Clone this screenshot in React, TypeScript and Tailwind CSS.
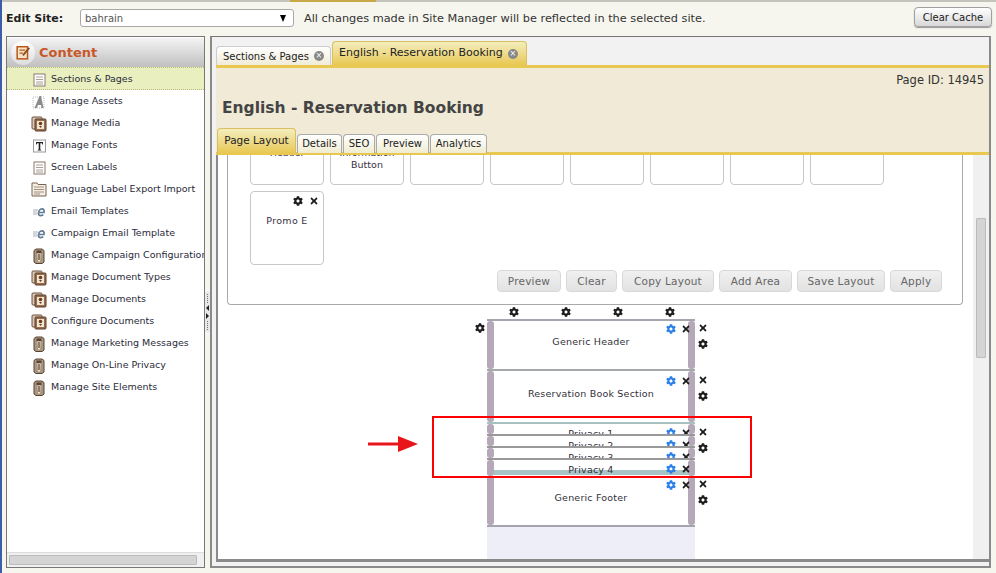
import React from "react";
import { FaCog, FaTimes } from "react-icons/fa";

const Gear = ({ blue = false }: { blue?: boolean }) => (
  <FaCog size={10} className={blue ? "text-[#2b7fe8] shrink-0" : "text-[#1c1c1c] shrink-0"} />
);
const Cross = () => <FaTimes size={10} className="text-[#1c1c1c] shrink-0" />;

const DocIcon = () => (
  <svg width="13" height="14" viewBox="0 0 13 14">
    <rect x="1" y="1" width="11" height="12" fill="#fff" stroke="#8a7a68" />
    <path d="M3 4h7M3 6.500h7M3 9h7M3 11h7" stroke="#a8a096" />
  </svg>
);
const AIcon = () => (
  <svg width="14" height="14" viewBox="0 0 14 14">
    <rect x="1" y="2" width="11" height="11" fill="none" stroke="#bbb" strokeDasharray="1 1" />
    <path d="M2.500 13 7.500 1h1.500l2.500 12h-2l-.5-3H6l-1.300 3Z" fill="#8a8a8a" />
  </svg>
);
const MediaIcon = () => (
  <svg width="16" height="16" viewBox="0 0 16 16">
    <rect x="1" y="1" width="10" height="12" rx="1" fill="#d8c8b4" stroke="#6f5340" />
    <rect x="4" y="3" width="11" height="12" rx="1" fill="#9a6c4a" stroke="#5a4030" />
    <rect x="6" y="5" width="7" height="8" fill="#f0e6d4" />
    <circle cx="9.500" cy="7.500" r="1.800" fill="#6a3e20" />
    <path d="M8 10h3l-1.500 2Z" fill="#6a3e20" />
  </svg>
);
const TIcon = () => (
  <svg width="13" height="14" viewBox="0 0 13 14">
    <rect x="0.500" y="1" width="12" height="12" fill="#fff" stroke="#999" />
    <path d="M3 3h7v2.500H9.300L9 4.200H7.300V10.500l1 .4V11.500H4.700v-.6l1-.4V4.200H4L3.700 5.500H3Z" fill="#222" />
  </svg>
);
const LangIcon = () => (
  <svg width="16" height="15" viewBox="0 0 16 15">
    <path d="M1 1h5l1 1.500h8V14H1Z" fill="#f4eee4" stroke="#7a6450" />
    <path d="M3 5h10M3 7.500h10M3 10h10M3 12h6" stroke="#a09080" />
  </svg>
);
const EmailIcon = () => (
  <svg width="13" height="10" viewBox="0 0 13 10">
    <path d="M0 3h5M0 5h4M0 7h4" stroke="#a8b0b8" />
    <path d="M6.500 5.500h4.500C11.500 3 10.300 1.800 9 1.800 7 1.800 5.500 4 5.500 6.200c0 1.500.9 2.400 2.300 2.400 1 0 1.800-.3 2.500-.9" fill="none" stroke="#5f7a94" strokeWidth="1.700" />
  </svg>
);
const CabinetIcon = () => (
  <svg width="12" height="16" viewBox="0 0 12 16">
    <path d="M1 2.500 3 1h6l2 1.500V14l-2 1.500H3L1 14Z" fill="#a89680" stroke="#5a4434" />
    <rect x="3.500" y="2.500" width="5" height="2.500" fill="#5a4434" />
    <path d="M4.500 5.500h3l-.5 8h-2Z" fill="#ece2d2" />
    <rect x="5.300" y="6" width="1.400" height="6" fill="#6a5240" />
  </svg>
);

type MenuItem = { label: string; icon: React.ReactNode; active?: boolean };
const menu: MenuItem[] = [
  { label: "Sections & Pages", icon: <DocIcon />, active: true },
  { label: "Manage Assets", icon: <AIcon /> },
  { label: "Manage Media", icon: <MediaIcon /> },
  { label: "Manage Fonts", icon: <TIcon /> },
  { label: "Screen Labels", icon: <DocIcon /> },
  { label: "Language Label Export Import", icon: <LangIcon /> },
  { label: "Email Templates", icon: <EmailIcon /> },
  { label: "Campaign Email Template", icon: <EmailIcon /> },
  { label: "Manage Campaign Configuration", icon: <CabinetIcon /> },
  { label: "Manage Document Types", icon: <MediaIcon /> },
  { label: "Manage Documents", icon: <MediaIcon /> },
  { label: "Configure Documents", icon: <MediaIcon /> },
  { label: "Manage Marketing Messages", icon: <CabinetIcon /> },
  { label: "Manage On-Line Privacy", icon: <CabinetIcon /> },
  { label: "Manage Site Elements", icon: <CabinetIcon /> },
];

const Card = ({ children }: { children?: React.ReactNode }) => (
  <div className="w-[74px] h-[74px] border border-[#c8c8c8] rounded-[4px] bg-white text-center text-[9.500px] leading-[12px] text-[#3a3045]">
    {children}
  </div>
);

const LayoutBtn = ({ label, w }: { label: string; w: string }) => (
  <div className={`${w} h-[22px] pt-[1px] flex items-center justify-center rounded-[4px] border border-[#d8d8d8] bg-gradient-to-b from-[#f0f0f0] to-[#e2e2e2] text-[10.500px] tracking-[0.2px] text-[#666]`}>
    {label}
  </div>
);

const Row = ({
  label,
  h,
  pt,
  iconTop,
  border,
  teal = false,
}: {
  label: string;
  h: string;
  pt: string;
  iconTop: string;
  border: string;
  teal?: boolean;
}) => (
  <div className={`relative ${h} ${pt} ${border} overflow-hidden bg-white text-center text-[9.500px] tracking-[0.2px] leading-[12px] text-[#33303a] box-border`}>
    {teal && <span className="absolute left-0 right-0 bottom-0 h-[5px] bg-[#a9c4c4]" />}
    <span className="absolute left-0 top-0 bottom-0 w-[7px] rounded-[3px] bg-[#b5a8b8]" />
    <span className="absolute right-0 top-0 bottom-0 w-[7px] rounded-[3px] bg-[#b5a8b8]" />
    <span className="relative">{label}</span>
    <div className={`absolute ${iconTop} right-[4px] flex items-center gap-[5px]`}>
      <Gear blue />
      <Cross />
    </div>
  </div>
);

const SideActions = () => (
  <div className="h-[52px] flex flex-col gap-[6px] pt-[4px]">
    <Cross />
    <Gear />
  </div>
);

const SubTab = ({ label, w }: { label: string; w: string }) => (
  <div className={`${w} h-[19px] pb-[1px] rounded-t-[4px] border border-[#aaa] border-b-0 bg-gradient-to-b from-white to-[#f0ecd0] flex items-center justify-center`}>
    {label}
  </div>
);

export default function App() {
  return (
    <div className="w-[996px] h-[573px] overflow-hidden bg-[#f6f6ee] border-l-2 border-l-[#3a5fa8] text-[#222] font-['DejaVu_Sans','Liberation_Sans',sans-serif] flex flex-col">
      <div className="h-[2px] flex shrink-0">
        <div className="w-[288px] bg-[#c4c4bc]" />
        <div className="w-[86px] bg-[#c8a848]" />
        <div className="flex-1 bg-[#c4c4bc]" />
      </div>

      <div className="h-[34px] shrink-0 flex items-center pl-[4px] pr-[4px]">
        <span className="w-[74px] font-bold text-[11px]">Edit Site:</span>
        <div className="w-[214px] h-[18px] mb-[2px] rounded-[3px] border border-[#a8a8a8] bg-white flex items-center justify-between pl-[4px] pr-[7px] text-[10px] text-[#555]">
          <span>bahrain</span>
          <span className="w-0 h-0 border-x-[3.500px] border-x-transparent border-t-[7px] border-t-black" />
        </div>
        <span className="ml-[10px] flex-1 text-[11.300px] text-[#333]">All changes made in Site Manager will be reflected in the selected site.</span>
        <div className="w-[78px] h-[20px] mb-[4px] rounded-[4px] border border-[#a0a0a0] bg-gradient-to-b from-white to-[#d8d8d8] shadow-[0_1px_1px_#999] flex items-center justify-center text-[10px] text-[#222]">
          Clear Cache
        </div>
      </div>

      <div className="flex-1 flex pl-[4px] pr-[5px] pb-[5px] min-h-0">
        <aside className="w-[199px] shrink-0 border border-[#777] bg-white flex flex-col overflow-hidden">
          <div className="h-[30px] shrink-0 flex items-center bg-gradient-to-b from-[#f4f4f4] to-[#c0c0c0] pl-[4px] gap-[4px] border-t border-t-white">
            <div className="w-[24px] h-[24px] rounded-full bg-gradient-to-b from-white to-[#ddd] flex items-center justify-center">
              <svg width="15" height="15" viewBox="0 0 13 13">
                <rect x="1" y="1.500" width="9" height="10.500" fill="#f6e4c8" stroke="#b8581c" strokeWidth="1.300" />
                <path d="M3 4.500h5M3 7h3" stroke="#b8581c" />
                <path d="M6 9 11.500 2.500" stroke="#8a4a1c" strokeWidth="1.500" />
              </svg>
            </div>
            <span className="font-bold text-[13px] text-[#c8582a]">Content</span>
          </div>
          <div className="flex-1 min-h-0">
            {menu.map((m) => (
              <div
                key={m.label}
                className={`flex items-center whitespace-nowrap overflow-hidden text-[9.500px] text-[#2a2a3a] ${
                  m.active ? "h-[23px] pt-[2px] bg-[#e9efbf] border-y border-dotted border-y-[#b8b878]" : "h-[22px] pt-[1px]"
                }`}
              >
                <span className="w-[44px] shrink-0 flex justify-end pr-[4px]">
                  <span className="w-[16px] flex justify-center">{m.icon}</span>
                </span>
                <span>{m.label}</span>
              </div>
            ))}
          </div>
          <div className="h-[15px] shrink-0 bg-[#f0f0f0] border-t border-t-[#ddd] px-[2px] py-[2px]">
            <div className="h-[10px] w-[188px] bg-[#d4d4d4] border border-[#bbb] rounded-[1px]" />
          </div>
        </aside>

        <div className="w-[5px] shrink-0 flex items-center">
          <div className="h-[40px] mt-[20px] w-full bg-[#e8e8e8] flex flex-col items-center justify-center gap-[2px]">
            <span className="h-[9px] border-l border-dotted border-l-[#777]" />
            <span className="w-0 h-0 border-y-[3px] border-y-transparent border-r-[3px] border-r-[#222]" />
            <span className="w-0 h-0 border-y-[3px] border-y-transparent border-l-[3px] border-l-[#222]" />
            <span className="h-[9px] border-l border-dotted border-l-[#777]" />
          </div>
        </div>

        <main className="flex-1 min-w-0 border-2 border-[#8a8a8a] border-t-[#777] border-t bg-[#f2f2f2] pl-[4px] pb-[4px] flex flex-col overflow-hidden">
          <div className="h-[28px] shrink-0 flex items-end gap-[1px] relative z-10">
            <div className="w-[115px] h-[19px] rounded-t-[4px] border border-[#ccc] border-b-0 bg-gradient-to-b from-white to-[#f0ecd8] flex items-center pl-[6px] gap-[5px] text-[10px] text-[#222]">
              <span>Sections &amp; Pages</span>
              <span className="w-[10px] h-[10px] rounded-full bg-[#888] text-white text-[8px] leading-[10px] text-center">×</span>
            </div>
            <div className="w-[195px] h-[24px] rounded-t-[4px] border border-[#d8c060] border-b-0 bg-gradient-to-b from-[#f4eebc] to-[#e8c850] flex items-center pl-[6px] gap-[5px] text-[11px] text-[#222]">
              <span>English - Reservation Booking</span>
              <span className="w-[10px] h-[10px] rounded-full bg-[#888] text-white text-[8px] leading-[10px] text-center">×</span>
            </div>
          </div>
          <div className="shrink-0 h-[90px] bg-[#f0ead6] border-t-[3px] border-b-[3px] border-y-[#e8c850] flex flex-col relative">
            <div className="text-right pr-[5px] pt-[5px] text-[11.500px] text-[#333] leading-[14px]">Page ID: 14945</div>
            <div className="pl-[6px] pt-[11px] font-bold text-[15.500px] leading-[20px] text-[#444]">English - Reservation Booking</div>
            <div className="absolute left-[1px] bottom-[-1px] flex items-end gap-[1px] h-[26px] text-[10px] text-[#222]">
              <div className="w-[79px] h-[25px] rounded-t-[4px] border border-[#d8c060] border-b-0 bg-gradient-to-b from-[#f4eebc] to-[#e8c850] flex items-center justify-center text-[10.500px]">Page Layout</div>
              <SubTab label="Details" w="w-[45px]" />
              <SubTab label="SEO" w="w-[32px]" />
              <SubTab label="Preview" w="w-[53px]" />
              <SubTab label="Analytics" w="w-[57px]" />
            </div>
          </div>

          <div className="flex-1 min-h-0 flex bg-white overflow-hidden border-b-[3px] border-b-[#8a8a8a] border-l-2 border-l-[#8a8a8a]">
            <div className="flex-1 min-w-0 relative overflow-hidden">
              <div className="flow-root ml-[9px] w-[736px] h-[150px] border border-[#aaa] border-t-0 rounded-b-[4px] pl-[22px]">
                <div className="flex gap-[6px] mt-[-44px]">
                  <Card><div className="pt-[35px]">Header</div></Card>
                  <Card><div className="pt-[35px]">Information<br />Button</div></Card>
                  <Card />
                  <Card />
                  <Card />
                  <Card />
                  <Card />
                  <Card />
                </div>
                <div className="mt-[6px] w-[74px] h-[74px] border border-[#c8c8c8] rounded-[4px] text-center text-[9.500px] tracking-[0.3px] leading-[12px] text-[#3a3045] pt-[4px]">
                  <div className="flex justify-end items-center gap-[6px] pr-[4px] h-[10px]">
                    <Gear />
                    <Cross />
                  </div>
                  <div className="mt-[9px]">Promo E</div>
                </div>
                <div className="mt-[5px] pr-[20px] flex justify-end gap-[5px]">
                  <LayoutBtn label="Preview" w="w-[64px]" />
                  <LayoutBtn label="Clear" w="w-[51px]" />
                  <LayoutBtn label="Copy Layout" w="w-[92px]" />
                  <LayoutBtn label="Add Area" w="w-[73px]" />
                  <LayoutBtn label="Save Layout" w="w-[88px]" />
                  <LayoutBtn label="Apply" w="w-[52px]" />
                </div>
              </div>

              <div className="ml-[269px] w-[240px]">
                <div className="h-[14px] flex items-center gap-[42px] pl-[22px]">
                  <Gear />
                  <Gear />
                  <Gear />
                  <Gear />
                </div>
                <div className="flex relative">
                  <div className="w-[208px] h-[243px] bg-[#eeeef8] shrink-0">
                    <Row label="Generic Header" h="h-[50px]" pt="pt-[15px]" iconTop="top-[3px]" border="border-t-2 border-t-[#a5a5ae]" />
                    <Row label="Reservation Book Section" h="h-[53px]" pt="pt-[17px]" iconTop="top-[5px]" border="border-t-2 border-t-[#a5a9ac]" />
                    <Row label="Privacy 1" h="h-[12px]" pt="pt-[4px]" iconTop="top-[4px]" border="border-t-2 border-t-[#a8c0c0]" />
                    <Row label="Privacy 2" h="h-[12px]" pt="pt-[4px]" iconTop="top-[4px]" border="border-t-2 border-t-[#999]" />
                    <Row label="Privacy 3" h="h-[12px]" pt="pt-[4px]" iconTop="top-[4px]" border="border-t-2 border-t-[#999]" />
                    <Row label="Privacy 4" h="h-[17px]" pt="pt-[4px]" iconTop="top-[4px]" border="border-t-2 border-t-[#999]" teal />
                    <Row label="Generic Footer" h="h-[52px]" pt="pt-[17px]" iconTop="top-[5px]" border="border-b-2 border-b-[#a5a5ae]" />
                  </div>
                  <div className="absolute left-[-12px] top-[4px]"><Gear /></div>
                  <div className="ml-[3px] w-[12px]">
                    <SideActions />
                    <SideActions />
                    <SideActions />
                    <SideActions />
                  </div>
                </div>
              </div>

              {/* annotation over the diagram */}
              <div className="absolute z-20 left-[214px] top-[261px] w-[320px] h-[62px] border-2 border-[#f00]" />
              <svg className="absolute left-[150px] top-[281px]" width="50" height="16" viewBox="0 0 50 16">
                <path d="M0 6.500h30V0l20 8-20 8V9.500H0Z" fill="#e8151b" />
              </svg>
            </div>
            <div className="w-[16px] shrink-0 bg-[#f0f0f0] pl-[3px] pt-[63px]">
              <div className="w-[10px] h-[140px] bg-[#d4d4d4] border border-[#bbb] rounded-[1px]" />
            </div>
          </div>
        </main>
      </div>
    </div>
  );
}
